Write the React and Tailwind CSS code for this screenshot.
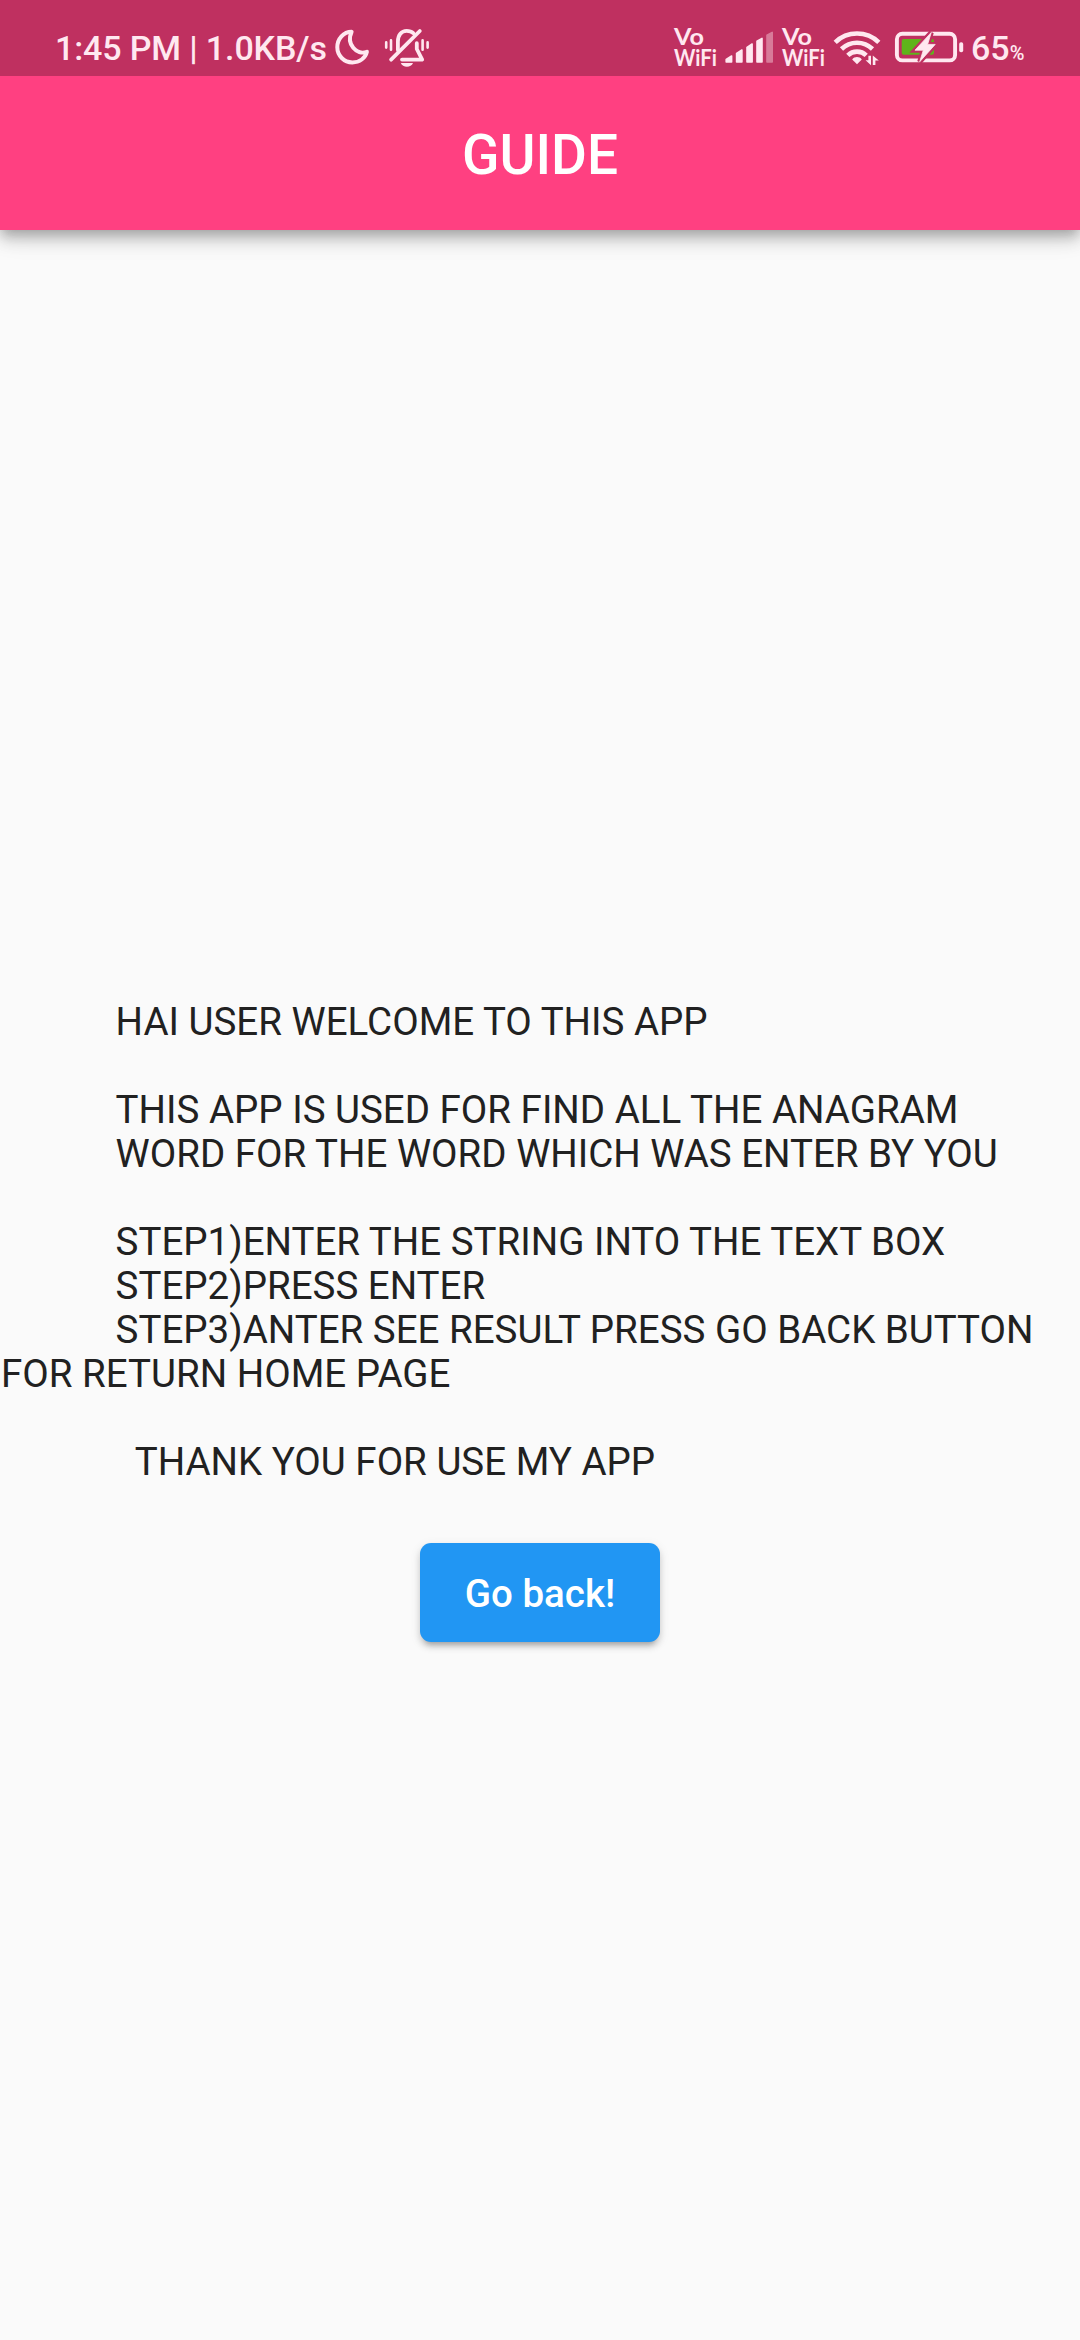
import React from "react";

const INK = "#ffe8f0";
const BAR = "#bf3060";

const GUIDE_TEXT = `            HAI USER WELCOME TO THIS APP

            THIS APP IS USED FOR FIND ALL THE ANAGRAM
            WORD FOR THE WORD WHICH WAS ENTER BY YOU

            STEP1)ENTER THE STRING INTO THE TEXT BOX
            STEP2)PRESS ENTER
            STEP3)ANTER SEE RESULT PRESS GO BACK BUTTON FOR RETURN HOME PAGE

              THANK YOU FOR USE MY APP`;

function Moon() {
  return (
    <svg className="block h-[76px] w-[36px]" viewBox="334 0 36 76" fill="none" stroke={INK} strokeWidth="4" strokeLinejoin="round">
      <path d="M351.6 31.8C343.6 31.8 337.3 39 337.3 47.3A15.1 15.1 0 0 0 352.4 62.4C359.5 62.4 365.4 58.2 366.9 51.8C356.5 55.6 346 44 351.6 31.8Z" />
    </svg>
  );
}

function BellOff() {
  return (
    <svg className="block h-[76px] w-[46px]" viewBox="384 0 46 76" fill="none" stroke={INK} strokeLinecap="round">
      <g strokeWidth="2.6">
        <path d="M386.2 42.4V47.6M391 40.4V49.8M422.6 40.4V49.8M427.6 42.4V47.6" />
      </g>
      <g strokeWidth="3.8" strokeLinejoin="round">
        <path d="M397.9 50V41.5C397.9 35 401.5 30.9 406.6 30.9C409.4 30.9 411.6 31.6 413.3 33.2" />
        <path d="M416.8 43.2V49L422.2 59.6H402" />
        <path d="M391.1 59.7L419.8 31" />
      </g>
      <path d="M400.8 63H413C411.9 65.5 409.7 66.8 406.9 66.8S401.9 65.5 400.8 63Z" fill={INK} stroke="none" />
    </svg>
  );
}

function VoWifi() {
  return (
    <svg
      className="block h-[76px] w-[44px] overflow-visible"
      viewBox="673 0 44 76"
      fill={INK}
      fontFamily="Lato, sans-serif"
      fontWeight="700"
      fontSize="22.6"
    >
      <text x="674" y="44.8" textLength="30" lengthAdjust="spacingAndGlyphs">Vo</text>
      <text x="674" y="66" textLength="43" lengthAdjust="spacingAndGlyphs">WiFi</text>
    </svg>
  );
}

function Signal() {
  return (
    <svg className="block h-[76px] w-[48px]" viewBox="725 0 48 76" fill={INK} stroke={INK} strokeWidth="1.6" strokeLinejoin="round">
      <path d="M726.2 59.4L731.6 56V62H726.2Z" />
      <path d="M736.6 53.4L741.9 50V62H736.6Z" />
      <path d="M747 47.4L752.1 44V62H747Z" />
      <path d="M757 41.2L762 38.4V62H757Z" />
      <g opacity=".4">
        <path d="M767 35.2L772.2 32.4V62H767Z" />
      </g>
    </svg>
  );
}

function Wifi() {
  return (
    <svg className="block h-[76px] w-[48px]" viewBox="833 0 48 76" fill="none" stroke={INK} strokeWidth="4.6">
      <path d="M835.2 42.3A31.5 31.5 0 0 1 878.8 42.3" />
      <path d="M841.5 49A22.3 22.3 0 0 1 872.5 49" />
      <path d="M847.8 55.4A13.2 13.2 0 0 1 866.2 55.4" />
      <path d="M852.2 59.4C854.6 56.2 859.4 56.2 861.8 59.4L857 64.2Z" fill={INK} stroke="none" />
      <path d="M868.4 55.8H871V65.2L865.6 60.2H868.4ZM872.8 65V55.4L878.8 60.6H875.4V65Z" fill={INK} stroke="none" />
    </svg>
  );
}

function Battery() {
  const bolt = "M931.3 32.4L915 50.2H923.3L919.7 61.8L935.2 44.4H927.6Z";
  return (
    <svg className="block h-[76px] w-[70px]" viewBox="894 0 70 76" fill="none">
      <rect x="896.9" y="33.7" width="58.2" height="26.7" rx="5.5" stroke={INK} strokeWidth="3.9" />
      <rect x="901.7" y="39" width="32.3" height="15.8" rx="2" fill="#5fb41b" />
      <path d={bolt} fill={BAR} stroke={BAR} strokeWidth="5" />
      <path d={bolt} fill={INK} stroke={INK} strokeWidth=".8" strokeLinejoin="round" />
      <rect x="959.2" y="42.3" width="4" height="10" rx="1.8" fill={INK} />
    </svg>
  );
}

export default function App() {
  return (
    <div className="flex h-[2340px] w-[1080px] flex-col overflow-hidden bg-[#fafafa] font-['Roboto',sans-serif]">
      <div className="z-10 shrink-0 bg-[#ff4081] shadow-[0_5px_11px_-2px_rgba(0,0,0,0.2),0_11px_14px_0_rgba(0,0,0,0.14),0_3px_28px_0_rgba(0,0,0,0.12)]">
        <div className="flex h-[76px] justify-between overflow-hidden bg-[#bf3060] pr-[54px] pl-[55px] text-[34px] leading-[40px] font-medium text-[#ffe8f0]">
          <div className="flex">
            <span className="w-[279px] pt-7 tracking-[-0.13px] whitespace-nowrap">1:45 PM | 1.0KB/s</span>
            <Moon />
            <div className="ml-[14px]"><BellOff /></div>
          </div>
          <div className="flex">
            <VoWifi />
            <div className="ml-[8px]"><Signal /></div>
            <div className="ml-[8px]"><VoWifi /></div>
            <div className="ml-[8px]"><Wifi /></div>
            <div className="ml-[13px]"><Battery /></div>
            <div className="ml-[7px] flex w-[55px] items-baseline pt-7">
              <span>65</span>
              <span className="text-[20px]">%</span>
            </div>
          </div>
        </div>
        <header className="flex h-[154px] items-center justify-center pt-1">
          <h1 className="text-[55px] leading-[64px] font-medium text-white">GUIDE</h1>
        </header>
      </div>
      <main className="flex flex-1 flex-col items-center pt-[770px]">
        <p className="w-full pl-px text-[38.5px] leading-[44px] whitespace-pre-wrap text-[#212121]">{GUIDE_TEXT}</p>
        <button className="mt-[59px] h-[99px] w-[240px] rounded-[11px] bg-[#2196f3] pt-0.5 text-[38.5px] font-medium text-white shadow-[0_7px_5px_-5px_rgba(0,0,0,0.2),0_5px_6px_0_rgba(0,0,0,0.13),0_3px_11px_0_rgba(0,0,0,0.1)]">
          Go back!
        </button>
      </main>
    </div>
  );
}
